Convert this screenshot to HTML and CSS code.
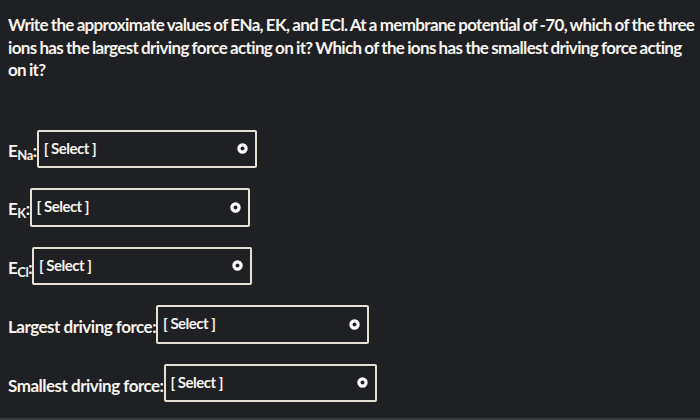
FILE: index.html
```html
<!DOCTYPE html>
<html>
<head>
<meta charset="utf-8">
<link rel="stylesheet" href="styles.css">
</head>
<body>
<div class="page">
  <p class="question">Write the approximate values of ENa, EK, and ECl. At a membrane potential of -70, which of the three ions has the largest driving force acting on it? Which of the ions has the smallest driving force acting on it?</p>
  <div class="rows">
    <div class="row">
      <span class="label">E<sub>Na</sub>:</span>
      <div class="select select-na"><span>[ Select ]</span><svg class="arrow" viewBox="0 0 11 11" width="11" height="11"><circle cx="5.5" cy="5.5" r="3.6" fill="none" stroke="#fff" stroke-width="3.2"/></svg></div>
    </div>
    <div class="row">
      <span class="label">E<sub>K</sub>:</span>
      <div class="select select-k"><span>[ Select ]</span><svg class="arrow" viewBox="0 0 11 11" width="11" height="11"><circle cx="5.5" cy="5.5" r="3.6" fill="none" stroke="#fff" stroke-width="3.2"/></svg></div>
    </div>
    <div class="row">
      <span class="label">E<sub>Cl</sub>:</span>
      <div class="select select-cl"><span>[ Select ]</span><svg class="arrow" viewBox="0 0 11 11" width="11" height="11"><circle cx="5.5" cy="5.5" r="3.6" fill="none" stroke="#fff" stroke-width="3.2"/></svg></div>
    </div>
    <div class="row">
      <span class="label">Largest driving force:</span>
      <div class="select select-big"><span>[ Select ]</span><svg class="arrow" viewBox="0 0 11 11" width="11" height="11"><circle cx="5.5" cy="5.5" r="3.6" fill="none" stroke="#fff" stroke-width="3.2"/></svg></div>
    </div>
    <div class="row">
      <span class="label">Smallest driving force:</span>
      <div class="select select-big"><span>[ Select ]</span><svg class="arrow" viewBox="0 0 11 11" width="11" height="11"><circle cx="5.5" cy="5.5" r="3.6" fill="none" stroke="#fff" stroke-width="3.2"/></svg></div>
    </div>
  </div>
</div>
<div class="strip"></div>
</body>
</html>
```

FILE: styles.css
```css
html, body {
  margin: 0;
  padding: 0;
  width: 700px;
  height: 420px;
  overflow: hidden;
  background: #1f2023;
}
body {
  display: flex;
  flex-direction: column;
  font-family: Lato, "Open Sans", sans-serif;
  font-weight: 700;
  color: #f6f3ee;
}
.page {
  flex: 1;
  padding: 0 0 0 8px;
}
.question {
  margin: 14px 0 0;
  font-size: 17px;
  line-height: 22.5px;
  letter-spacing: -0.65px;
  word-spacing: -0.6px;
}
.rows {
  display: flex;
  flex-direction: column;
  gap: 20px;
  margin-top: 48px;
}
.row {
  display: flex;
  align-items: center;
}
.label {
  font-size: 17px;
  letter-spacing: -0.5px;
  padding-top: 5px;
}
.label sub {
  font-size: 13px;
  vertical-align: -3px;
  letter-spacing: -0.5px;
}
.select {
  box-sizing: border-box;
  height: 38.5px;
  border: 2px solid #e6e1d4;
  border-radius: 2px;
  display: flex;
  align-items: center;
  justify-content: space-between;
  padding: 0 7px 0 5px;
  font-size: 15px;
  letter-spacing: -0.5px;
}
.select span { padding-bottom: 2px; }
.select-na { width: 220px; }
.select-k { width: 220px; }
.select-cl { width: 220px; }
.select-big { width: 213px; }
.arrow { display: block; }
.strip {
  height: 2px;
  background: #3c3d40;
}
```
